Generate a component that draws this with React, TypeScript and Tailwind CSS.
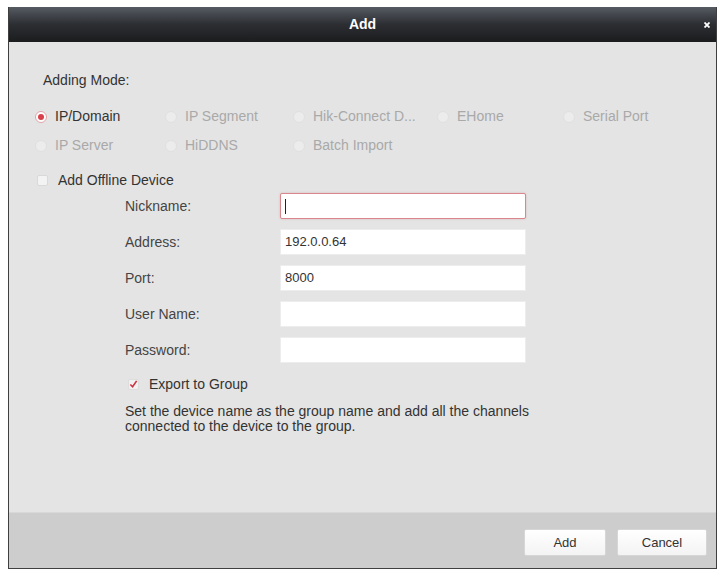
import React from "react";

const font = { fontFamily: '"Liberation Sans", Arial, sans-serif' };

function Radio({ selected, label, disabled }: { selected?: boolean; label: string; disabled?: boolean }) {
  return (
    <div className="flex items-center h-[29px]">
      {selected ? (
        <span className="w-[12px] h-[12px] rounded-full bg-white border border-[#e2a3a8] flex items-center justify-center">
          <span className="w-[6px] h-[6px] rounded-full bg-[#d8404b]" />
        </span>
      ) : (
        <span className="w-[12px] h-[12px] rounded-full bg-[#ececec] border border-[#e0e0e0]" />
      )}
      <span className={"ml-[8px] text-[14px] " + (disabled ? "text-[#a9a9a9]" : "text-[#333333]")}>{label}</span>
    </div>
  );
}

function Field({ label, value, focused }: { label: string; value?: string; focused?: boolean }) {
  return (
    <div className="flex items-center h-[26px]">
      <span className="w-[155px] text-[14px] text-[#444444]">{label}</span>
      <div
        className={
          "w-[246px] h-[26px] bg-white flex items-center px-[4px] text-[13px] text-[#333333] " +
          (focused ? "border border-[#d9868c] rounded-[2px] shadow-[0_0_2px_rgba(217,134,140,0.5)]" : "border border-[#ededed]")
        }
      >
        {focused ? <span className="w-[1px] h-[15px] bg-[#222222]" /> : <span>{value}</span>}
      </div>
    </div>
  );
}

export default function App() {
  return (
    <div className="w-[721px] h-[571px] bg-white pl-[8px] pt-[7px]" style={font}>
      <div className="w-[709px] h-[562px] flex flex-col border-x border-b border-[#3f3f3f]">
        <div className="h-[35px] flex items-center justify-center relative bg-gradient-to-b from-[#565b63] via-[#2c2e32] to-[#1b1c1e]">
          <span className="text-white font-bold text-[14px]">Add</span>
          <svg className="absolute right-[6px] top-[15px]" width="6" height="6" viewBox="0 0 6 6">
            <path d="M0.5 0.5L5.5 5.5M5.5 0.5L0.5 5.5" stroke="white" strokeWidth="1.8" />
          </svg>
        </div>
        <div className="flex-1 bg-[#e4e4e4] pt-[30px]">
          <div className="pl-[34px] text-[14px] leading-[16px] text-[#333333]">Adding Mode:</div>
          <div className="mt-[14px] pl-[26px] grid grid-cols-[130px_128px_144px_126px_auto]">
            <Radio selected label="IP/Domain" />
            <Radio label="IP Segment" disabled />
            <Radio label="Hik-Connect D..." disabled />
            <Radio label="EHome" disabled />
            <Radio label="Serial Port" disabled />
            <Radio label="IP Server" disabled />
            <Radio label="HiDDNS" disabled />
            <Radio label="Batch Import" disabled />
          </div>
          <div className="mt-[8px] pl-[28px] h-[24px] flex items-center">
            <span className="w-[11px] h-[11px] bg-[#f3f3f3] border border-[#d9d9d9] rounded-[2px]" />
            <span className="ml-[10px] text-[14px] text-[#333333]">Add Offline Device</span>
          </div>
          <div className="mt-[1px] pl-[116px] flex flex-col gap-[10px]">
            <Field label="Nickname:" focused />
            <Field label="Address:" value="192.0.0.64" />
            <Field label="Port:" value="8000" />
            <Field label="User Name:" />
            <Field label="Password:" />
          </div>
          <div className="mt-[9px] pl-[119px] h-[24px] flex items-center">
            <span className="w-[11px] h-[11px] bg-[#f1f1f1] border border-[#dddddd] rounded-[2px] flex items-center justify-center">
              <svg width="10" height="10" viewBox="0 0 10 10">
                <path d="M1.5 5.5L4 8L8.5 1.5" stroke="#cc3340" strokeWidth="1.8" fill="none" />
              </svg>
            </span>
            <span className="ml-[10px] text-[14px] text-[#333333]">Export to Group</span>
          </div>
          <div className="mt-[8px] pl-[116px] text-[14px] leading-[15px] text-[#333333]">
            <div>Set the device name as the group name and add all the channels</div>
            <div>connected to the device to the group.</div>
          </div>
        </div>
        <div className="h-[56px] bg-[#cdcdcd] border-t border-[#d8d8d8] flex items-start justify-end pt-[16px] pr-[9px] gap-[11px]">
          <button className="w-[82px] h-[27px] rounded-[2px] bg-gradient-to-b from-white to-[#f3f3f3] border border-[#d6d6d6] text-[13px] text-[#333333]">
            Add
          </button>
          <button className="w-[90px] h-[27px] rounded-[2px] bg-gradient-to-b from-white to-[#f3f3f3] border border-[#d6d6d6] text-[13px] text-[#333333]">
            Cancel
          </button>
        </div>
      </div>
    </div>
  );
}
